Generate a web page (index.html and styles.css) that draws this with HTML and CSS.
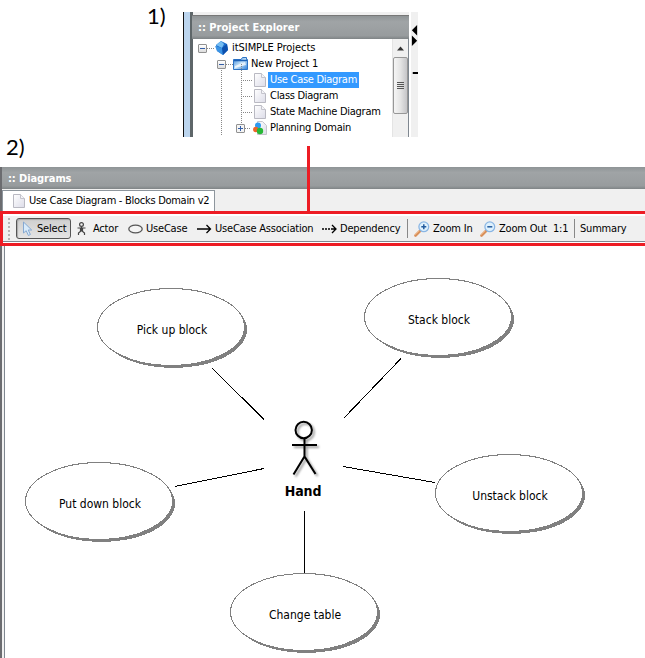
FILE: index.html
```
<!DOCTYPE html>
<html lang="en">
<head>
<meta charset="utf-8">
<title>itSIMPLE Diagrams</title>
<link rel="stylesheet" href="styles.css">
</head>
<body>
<svg class="defs" width="0" height="0" aria-hidden="true">
  <defs>
    <linearGradient id="paper" x1="0" y1="0" x2="1" y2="1"><stop offset="0" stop-color="#fff"/><stop offset="1" stop-color="#dcdce8"/></linearGradient>
    <linearGradient id="folder" x1="0" y1="0" x2="1" y2="1"><stop offset="0" stop-color="#2f7fd8"/><stop offset=".5" stop-color="#c4e2f8"/><stop offset="1" stop-color="#2c7fdb"/></linearGradient>
    <symbol id="page" viewBox="0 0 12 14"><path d="M.5.5h7l4 4v9H.5z" fill="url(#paper)" stroke="#b9b9c2"/><path d="M7.5.5v4h4" fill="#f4f4f8" stroke="#c4c4cc"/></symbol>
    <symbol id="lens" viewBox="0 0 16 16"><path d="M1.5 14.5 6 10" stroke="#d9905a" stroke-width="2.6" stroke-linecap="round"/><path d="M1 13.6 5.2 9.6" stroke="#f4c193" stroke-width="1"/><circle cx="9.8" cy="5.8" r="4.9" fill="#dff1fd" stroke="#8ab6e4" stroke-width="1.3"/></symbol>
    <symbol id="bubble" viewBox="0 0 150 80"><ellipse cx="76.4" cy="41.4" rx="73.6" ry="38.6" fill="#808080"/><ellipse cx="74" cy="39" rx="73.5" ry="38.5" fill="#fff" stroke="#808080"/></symbol>
  </defs>
</svg>
<main class="figure">
  <section class="step-one">
    <h2 class="step">1)</h2>
    <div class="explorer">
      <div class="explorer-main">
        <header class="title">:: Project Explorer</header>
        <div class="explorer-body">
          <ul class="tree">
            <li class="l0"><i class="toggle"></i><i class="dots"></i>
              <svg width="15" height="16" viewBox="0 0 15 16"><path d="M2 5 7 1l6 3 1 6-5 5-6-4z" fill="#1c6fce"/><path d="m2 5 5-4 3 3-2 4z" fill="#75bdf2"/><path d="m1 6 7 2 1 7-6-4z" fill="#3b93e4"/><path d="m8 8 5-4 1 6-5 5z" fill="#0d50ae"/></svg>
              <span>itSIMPLE Projects</span></li>
            <li class="l1"><i class="toggle"></i><i class="dots"></i>
              <svg width="15" height="14" viewBox="0 0 15 14"><path d="M.5 2.500H8l1.500-2h4v2h1v10H.5z" fill="url(#folder)" stroke="#2c73c5"/><path d="M2 9 12 5l1 3-11 3z" fill="#fff" opacity=".7"/><path d="M1 3.500h13" stroke="#1c61b6" stroke-width="1.500"/></svg>
              <span>New Project 1</span></li>
            <li class="l2"><i class="dots"></i><svg width="12" height="14"><use href="#page"/></svg><span class="selected">Use Case Diagram</span></li>
            <li class="l2"><i class="dots"></i><svg width="12" height="14"><use href="#page"/></svg><span>Class Diagram</span></li>
            <li class="l2"><i class="dots"></i><svg width="12" height="14"><use href="#page"/></svg><span>State Machine Diagram</span></li>
            <li class="l2 branch"><i class="toggle plus"></i><i class="dots"></i>
              <svg width="14" height="14" viewBox="0 0 14 14"><path d="M4.500.5h5l4 4v9h-9z" fill="url(#paper)" stroke="#c4c4cc"/><circle cx="5" cy="4.500" r="3" fill="#2d9bf0"/><circle cx="2.800" cy="8.500" r="2.700" fill="#ee6429"/><circle cx="7" cy="10" r="3.200" fill="#27b836"/></svg>
              <span>Planning Domain</span></li>
          </ul>
          <div class="scrollbar">
            <svg width="15" height="18" viewBox="0 0 15 18"><path d="m4 11.500 3.500-4 3.500 4z" fill="#333"/></svg>
            <div class="thumb"><i></i><i></i><i></i><i></i></div>
          </div>
        </div>
      </div>
      <svg class="splitter" width="8" height="125" viewBox="0 0 8 125"><path d="M7 6v12L1 12zM1 18v12l6-6zM2 59.500h6v2.500H2z"/></svg>
    </div>
  </section>

  <section class="step-two">
    <h2 class="step">2)</h2>
    <div class="connector"></div>
  </section>

  <section class="diagrams">
    <header class="title">:: Diagrams</header>
    <div class="tabs"><div class="tab"><svg width="12" height="14"><use href="#page"/></svg><span>Use Case Diagram - Blocks Domain v2</span></div></div>
    <nav class="toolbar">
      <i class="grip"></i>
      <button class="tool active"><svg width="11" height="16" viewBox="0 0 11 16"><path d="M1.500 1v11l2.700-2.300 2.200 4.800 2-1-2.200-4.500h3.500z" fill="#d8ebfb" stroke="#86a9d2"/></svg>Select</button>
      <button class="tool person"><svg width="9" height="14" viewBox="0 0 9 14" fill="none" stroke="#444" stroke-width="1.200"><circle cx="4.500" cy="2.500" r="1.900"/><path d="M4.500 4.500V9M.5 6h8M1.500 13v-2l3-2.500 3 2.500v2M3.500 6v3M5.500 6v3"/></svg>Actor</button>
      <button class="tool"><svg width="15" height="10" viewBox="0 0 15 10"><ellipse cx="7.500" cy="5" rx="6.700" ry="3.900" fill="#f4f4f4" stroke="#555" stroke-width="1.300"/></svg>UseCase</button>
      <button class="tool"><svg width="15" height="10" viewBox="0 0 15 10" fill="none" stroke="#000" stroke-width="1.300"><path d="M0 5h13.500M9.500 1l4 4-4 4"/></svg>UseCase Association</button>
      <button class="tool"><svg width="15" height="10" viewBox="0 0 15 10" fill="none" stroke="#000" stroke-width="1.300"><path d="M0 5h10" stroke-dasharray="2 1"/><path d="M10 1l4 4-4 4M10 5h4"/></svg>Dependency</button>
      <i class="rule"></i>
      <button class="tool"><svg width="16" height="16"><use href="#lens"/><path d="M7.300 5.800h5M9.800 3.300v5" stroke="#235b9e" stroke-width="1.500"/></svg>Zoom In</button>
      <button class="tool"><svg width="16" height="16"><use href="#lens"/><path d="M7.300 5.800h5" stroke="#235b9e" stroke-width="1.500"/></svg>Zoom Out</button>
      <button class="tool">1:1</button>
      <i class="rule"></i>
      <button class="tool">Summary</button>
    </nav>
    <div class="canvas">
      <svg class="links" width="640" height="412" viewBox="5 246 640 412" shape-rendering="crispEdges"><path d="M212.500 368.500 264 419.500M401 358.500 343.500 418.500M175 486.500 264 468.500M343 466.500 435 482.500M304.500 511v63" fill="none" stroke="#000"/></svg>
      <div class="usecase pick"><svg shape-rendering="crispEdges"><use href="#bubble"/></svg><span>Pick up block</span></div>
      <div class="usecase stack"><svg shape-rendering="crispEdges"><use href="#bubble"/></svg><span>Stack block</span></div>
      <div class="usecase put"><svg shape-rendering="crispEdges"><use href="#bubble"/></svg><span>Put down block</span></div>
      <div class="usecase unstack"><svg shape-rendering="crispEdges"><use href="#bubble"/></svg><span>Unstack block</span></div>
      <div class="usecase change"><svg shape-rendering="crispEdges"><use href="#bubble"/></svg><span>Change table</span></div>
      <div class="actor">
        <svg width="32" height="60" viewBox="0 0 32 60"><g fill="none" stroke="#000" stroke-width="2"><circle cx="15.700" cy="10" r="8.200"/><path d="M16.500 18v19M4 25h25M5.500 54.500l11-18 11 17.500"/></g></svg>
        <strong>Hand</strong>
      </div>
    </div>
  </section>
</main>
</body>
</html>
```
FILE: styles.css
```
* { box-sizing: border-box; }
body { margin: 0; background: #fff; color: #000; font: 11px/16px "DejaVu Sans Condensed", "DejaVu Sans", sans-serif; font-stretch: condensed; letter-spacing: -.2px; }
svg { display: block; flex: none; }
.defs { position: absolute; }
.figure { width: 645px; height: 658px; overflow: hidden; }
.step { margin: 0; font: 22px/24px Lato, sans-serif; letter-spacing: 0; }
.title { color: #fff; background: linear-gradient(#8f9496, #a0a4a6 25%, #989c9e 85%, #7f8486); font-weight: bold; white-space: nowrap; letter-spacing: -.1px; }

.step-one { display: flex; height: 137px; padding-left: 147px; }
.step-one .step { width: 36px; padding-top: 4px; }
.explorer { display: flex; width: 235px; height: 125px; margin-top: 12px; background: #f0f0f0; border-left: 1px solid #111; }
.explorer-main { width: 227px; border-left: 6px solid #bcd5ee; padding-top: 3px; border-right: 2px solid #fff; box-shadow: inset 3px 0 #5e6669; }
.explorer-main .title { height: 24px; margin-left: 2px; padding: 4px 0 0 6px; border-top: 1px solid #777; line-height: 15px; letter-spacing: 0; }
.explorer-body { display: flex; height: 98px; margin-left: 3px; background: #fff; border-right: 1px solid #7f8790; overflow: hidden; }
.tree { flex: 1; margin: 0; padding: 1px 0 0 5px; list-style: none; letter-spacing: -.28px; }
.tree li { display: flex; align-items: center; height: 16px; white-space: nowrap; }
.tree span { height: 16px; padding: 0 2px; line-height: 16px; }
.tree .selected { background: #3399ff; color: #fff; width: 91px; }
.tree .l0 { letter-spacing: -.05px; }
.tree .l0 svg { margin-right: 1px; }
.tree .l1 { padding-left: 19px; letter-spacing: -.05px; }
.tree .l1 svg { margin-right: 1px; }
.tree .l2 { position: relative; padding-left: 45px; }
.tree .l2::before, .tree .l2::after { content: ""; position: absolute; left: 23px; top: -8px; width: 1px; height: 16px; background: repeating-linear-gradient(#888 0 1px, transparent 1px 2px); }
.tree .l2::after { left: 43px; }
.tree .branch::before { height: 24px; }
.tree .branch::after { height: 11px; }
.tree .l2 .dots { width: 9px; margin-right: 2px; }
.tree .l2 svg { margin-right: 2px; }
.tree .branch { padding-left: 38px; letter-spacing: -.2px; }
.tree .branch .dots { width: 6px; }
.tree .branch svg { margin-right: 1px; }
.dots { width: 7px; height: 1px; background: repeating-linear-gradient(90deg, #888 0 1px, transparent 1px 2px); }
.toggle { position: relative; z-index: 1; width: 9px; height: 9px; border: 1px solid #919191; border-radius: 1px; background: linear-gradient(#345fa8, #345fa8) center / 5px 1px no-repeat, linear-gradient(#fff, #ddd); }
.toggle.plus { background: linear-gradient(#345fa8, #345fa8) center / 5px 1px no-repeat, linear-gradient(#345fa8, #345fa8) center / 1px 5px no-repeat, #f4f4f4; }
.scrollbar { width: 16px; background: #f0f0f0; border-left: 1px solid #e4e4e4; }
.thumb { display: flex; flex-direction: column; align-items: center; justify-content: center; gap: 1px; width: 15px; height: 57px; border: 1px solid #979797; border-radius: 2px; background: linear-gradient(90deg, #f5f5f5, #e4e4e4 50%, #c5c5c8); }
.thumb i { width: 7px; height: 1px; background: #555; }
.splitter { width: 7px; }

.step-two { display: flex; height: 30px; padding-left: 6px; }
.step-two .step { width: 301px; margin-top: -2px; }
.connector { position: relative; z-index: 2; width: 3px; height: 66px; margin-top: 9px; background: #ed1c24; }
.diagrams { height: 491px; background: #f0f0f0; border-left: 2px solid #6b6c70; }
.diagrams > .title { height: 22px; padding: 4px 0 0 6px; line-height: 15px; }
.tabs { height: 22px; padding-top: 1px; }
.tab { display: flex; align-items: center; gap: 4px; width: 213px; height: 21px; padding-left: 10px; background: #fff; border: 1px solid #8e969d; border-width: 1px 1px 0; white-space: nowrap; letter-spacing: -.28px; }
.toolbar { display: grid; grid-template-columns: 8px 56px 51px 69px 125px 90px 2px 66px 73px 26px 1px 1fr; align-items: center; width: 645px; height: 35px; margin-left: -2px; padding-left: 5px; border: 3px solid #ed1c24; border-right: 0; box-shadow: inset 0 2px #fff, inset 0 -1px #fff, inset 0 -2px #7f8790; }
.grip { width: 2px; height: 22px; background: repeating-linear-gradient(#b5b5b5 0 2px, transparent 2px 4px); }
.tool { display: flex; align-items: center; gap: 3px; height: 21px; margin: 0; padding: 0 0 0 5px; border: 0; background: none; color: #000; font: inherit; letter-spacing: inherit; white-space: nowrap; }
.tool.active { width: 55px; gap: 4px; border: 1px solid #555; border-radius: 3px; background: linear-gradient(#cfcfcf, #e4e4e4); box-shadow: inset 1px 1px 1px #aaa; }
.tool.person { gap: 7px; }
.rule { width: 1px; height: 19px; background: #888; }
.canvas { position: relative; height: 412px; margin-left: 2px; background: #fff; border-left: 1px solid #7f8790; }
.links { position: absolute; left: 0; top: 0; }
.usecase { position: absolute; width: 150px; height: 80px; display: flex; align-items: center; justify-content: center; padding-top: 3px; font-size: 12px; }
.usecase svg { position: absolute; left: 0; top: 0; width: 150px; height: 80px; }
.usecase span { position: relative; letter-spacing: 0; }
.pick { left: 92px; top: 42px; }
.stack { left: 359px; top: 32px; }
.put { left: 20px; top: 216px; }
.unstack { left: 430px; top: 208px; }
.change { left: 225px; top: 327px; }
.actor { position: absolute; left: 274px; top: 174px; width: 50px; display: flex; flex-direction: column; align-items: center; }
.actor svg { filter: drop-shadow(2px 2px 1px rgba(0, 0, 0, .4)); }
.actor strong { margin-top: 3px; margin-left: -2px; font-size: 14px; line-height: 17px; letter-spacing: -.1px; }
```
